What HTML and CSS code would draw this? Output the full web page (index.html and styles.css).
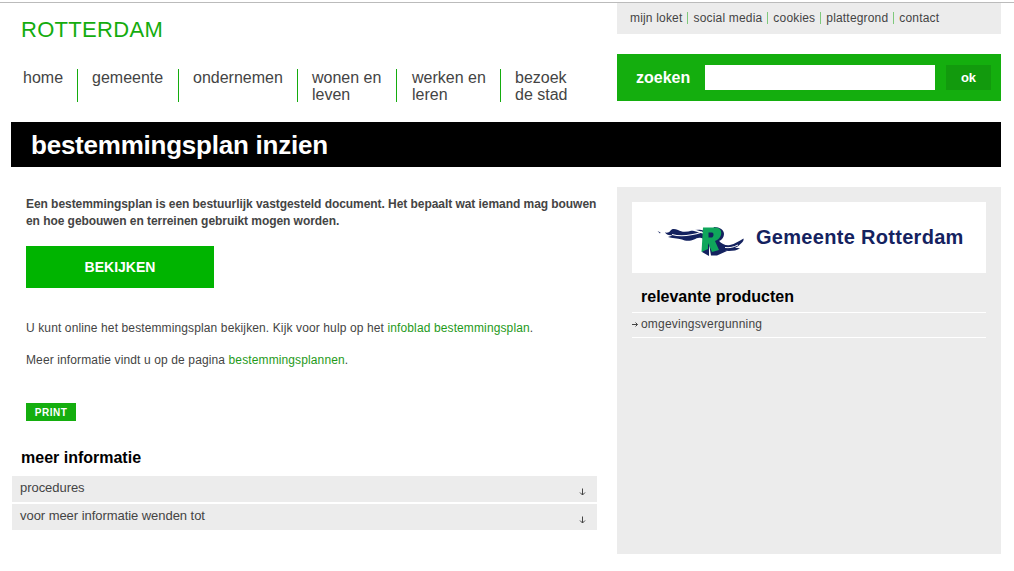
FILE: index.html
```html
<!DOCTYPE html>
<html lang="nl">
<head>
    <meta charset="UTF-8">
    <meta name="viewport" content="width=device-width, initial-scale=1.0">
    <title>Bestemmingsplan inzien</title>
    <link rel="stylesheet" href="styles.css">
</head>
<body>

<div class="top-line"></div>

<div class="page">
    <header class="header">
        <div class="header-left">
            <a class="site-name" href="#">ROTTERDAM</a>
            <ul class="main-nav">
                <li class="nav-home"><a href="#">home</a></li>
                <li class="nav-gemeente"><a href="#">gemeente</a></li>
                <li class="nav-ondernemen"><a href="#">ondernemen</a></li>
                <li class="nav-wonen"><a href="#">wonen en<br>leven</a></li>
                <li class="nav-werken"><a href="#">werken en<br>leren</a></li>
                <li class="nav-bezoek"><a href="#">bezoek<br>de stad</a></li>
            </ul>
        </div>
        <div class="header-right">
            <ul class="service-nav">
                <li><a href="#">mijn loket</a></li>
                <li><a href="#">social media</a></li>
                <li><a href="#">cookies</a></li>
                <li><a href="#">plattegrond</a></li>
                <li><a href="#">contact</a></li>
            </ul>
            <form class="search">
                <label for="search-input">zoeken</label>
                <input type="text" id="search-input">
                <button type="button">ok</button>
            </form>
        </div>
    </header>

    <h1 class="page-title">bestemmingsplan inzien</h1>

    <div class="columns">
        <main class="content">
            <p class="intro">Een bestemmingsplan is een bestuurlijk vastgesteld document. Het bepaalt wat iemand mag bouwen en hoe gebouwen en terreinen gebruikt mogen worden.</p>
            <a class="view-btn" href="#">BEKIJKEN</a>
            <p class="text">U kunt online het bestemmingsplan bekijken. Kijk voor hulp op het <a href="#">infoblad bestemmingsplan</a>.</p>
            <p class="text">Meer informatie vindt u op de pagina <a href="#">bestemmingsplannen</a>.</p>
            <a class="print-btn" href="#">PRINT</a>

            <h2 class="more-title">meer informatie</h2>
            <div class="fold">
                <span>procedures</span>
                <svg width="7" height="8" viewBox="0 0 7 8"><path d="M3.5 0.5V7M1 4.5L3.5 7L6 4.5" fill="none" stroke="#444" stroke-width="1"/></svg>
            </div>
            <div class="fold">
                <span>voor meer informatie wenden tot</span>
                <svg width="7" height="8" viewBox="0 0 7 8"><path d="M3.5 0.5V7M1 4.5L3.5 7L6 4.5" fill="none" stroke="#444" stroke-width="1"/></svg>
            </div>
        </main>

        <aside class="sidebar">
            <div class="logo-box">
                <svg class="logo-mark" width="88" height="32" viewBox="0 0 88 32">
                    <!-- left wave -->
                    <path d="M0.5 5L3.5 6.5L3 7.5Z" fill="#14225f"/>
                    <path d="M8 6.5C11 7 13 6 14 4C15 2.5 18 2.5 21 4C25 6.5 30 6 35 4.5C39 3.5 44 3.5 48 5L47 13C42 10.5 40 12 37 13.5C33 15.5 28 15 25 13.5C20 12 15 12.5 11 11C13 10.5 14 10 15 9C12 9.5 9 8.5 8 6.5Z" fill="#14225f"/>
                    <path d="M15 8.5C24 11 33 10 45 6" fill="none" stroke="#fff" stroke-width="1.2"/>
                    <path d="M33 3L50 8" fill="none" stroke="#fff" stroke-width="1.6"/>
                    <!-- R -->
                    <path d="M57 1C63 1 67 4 67 8C67 11 65 14 62 15L66 23L70 25L60 29.5L54 29.5L52 18V30L45 26Z" fill="#14225f"/>
                    <path d="M46 1.5H58C63 1.5 65 5 64 9C63 12 61 14 58 15L62 24L55 26L51 17V23L44.5 26Z" fill="#0fa65b"/>
                    <path d="M51.5 6.5H55C57 6.5 57 10.5 55 11.5H51.5Z" fill="#14225f"/>
                    <!-- right wave -->
                    <path d="M62 15C65 18 69 20 73 19C78 18 82 15 86.5 12.5C87 14 86 16 84 17.5C82 19.5 80 21 78 22C80 22 81.5 22 83 22.5C79 25 72 25.5 66 24.5C63 23 61 19 62 15Z" fill="#14225f"/>
                    <path d="M68 21.5C72 22 76 21.5 81 19" fill="none" stroke="#fff" stroke-width="1"/>
                </svg>
                <span class="logo-text">Gemeente Rotterdam</span>
            </div>
            <h2 class="products-title">relevante producten</h2>
            <ul class="products">
                <li>
                    <svg width="6" height="5" viewBox="0 0 6 5"><path d="M0 2.5H5.5M3.5 0.5L5.5 2.5L3.5 4.5" fill="none" stroke="#444" stroke-width="1"/></svg>
                    <a href="#">omgevingsvergunning</a>
                </li>
            </ul>
        </aside>
    </div>
</div>

</body>
</html>
```

FILE: styles.css
```css
body {
    font-family: "Liberation Sans", Arial, sans-serif;
    margin: 0;
    padding: 0;
    background-color: #fff;
    color: #444;
    font-size: 12px;
}

a {
    color: inherit;
    text-decoration: none;
}

ul {
    list-style: none;
    margin: 0;
    padding: 0;
}

.top-line {
    margin-top: 2px;
    height: 1px;
    background-color: #bbb;
}

.page {
    width: 990px;
    margin-left: 11px;
}

/* header */
.header {
    display: flex;
    justify-content: space-between;
    height: 119px;
}

.site-name {
    display: block;
    margin: 14px 0 0 10px;
    font-size: 22px;
    letter-spacing: 0.3px;
    line-height: 25px;
    color: #14ac0e;
}

.main-nav {
    display: flex;
    margin-top: 27px;
    font-size: 16px;
    line-height: 17px;
}

.main-nav li {
    height: 33px;
    padding-left: 14px;
    border-left: 1px solid #14ac0e;
}

.main-nav .nav-home {
    border-left: none;
    padding-left: 12px;
    width: 54px;
}

.nav-gemeente { width: 86px; }
.nav-ondernemen { width: 104px; }
.nav-wonen { width: 84px; }
.main-nav .nav-werken { width: 88px; padding-left: 15px; }
.nav-bezoek { width: 70px; }

.header-right {
    width: 384px;
}

.service-nav {
    display: flex;
    align-items: center;
    height: 29px;
    padding-left: 13px;
    padding-bottom: 2px;
    background-color: #ececec;
    letter-spacing: 0.18px;
}

.service-nav li {
    padding: 0 5px;
    line-height: 12px;
    border-left: 1px solid #7fc97c;
}

.service-nav li:first-child {
    padding-left: 0;
    border-left: none;
}

.search {
    display: flex;
    align-items: center;
    height: 47px;
    margin-top: 20px;
    background-color: #14ae0e;
}

.search label {
    width: 88px;
    padding-left: 19px;
    box-sizing: border-box;
    font-size: 16px;
    font-weight: bold;
    color: #fff;
}

.search input {
    width: 230px;
    height: 25px;
    padding: 0;
    border: none;
    background-color: #fff;
}

.search button {
    width: 45px;
    height: 25px;
    margin-left: 11px;
    padding: 0;
    border: none;
    background-color: #129a0d;
    color: #fff;
    font-family: inherit;
    font-size: 13px;
    font-weight: bold;
}

.page-title {
    margin: 0;
    height: 45px;
    padding-left: 20px;
    background-color: #000;
    color: #fff;
    font-size: 26px;
    letter-spacing: -0.23px;
    line-height: 46px;
}

/* columns */
.columns {
    display: flex;
    justify-content: space-between;
    margin-top: 20px;
}

.content {
    width: 586px;
}

.intro {
    margin: 9px -2px 0 15px;
    font-weight: bold;
    letter-spacing: -0.055px;
    line-height: 17px;
}

.view-btn {
    display: block;
    width: 188px;
    height: 42px;
    margin: 16px 0 0 15px;
    background-color: #00b400;
    color: #fff;
    font-size: 14px;
    font-weight: bold;
    line-height: 42px;
    text-align: center;
}

.text {
    margin: 32px 0 0 15px;
    letter-spacing: 0.12px;
    line-height: 16px;
}

.text + .text {
    margin-top: 16px;
}

.text a {
    color: #1f9a1a;
}

.print-btn {
    display: block;
    width: 50px;
    height: 18px;
    margin: 35px 0 0 15px;
    background-color: #14ae0e;
    color: #fff;
    font-size: 10px;
    font-weight: bold;
    letter-spacing: 0.5px;
    line-height: 19px;
    text-align: center;
}

.more-title {
    margin: 27px 0 0 10px;
    color: #000;
    font-size: 16px;
    line-height: 19px;
}

.fold {
    display: flex;
    justify-content: space-between;
    height: 26px;
    margin: 2px 0 0 1px;
    padding: 4px 11px 0 8px;
    box-sizing: border-box;
    font-size: 13px;
    letter-spacing: -0.05px;
    line-height: 16px;
    background-color: #ececec;
}

.more-title + .fold {
    margin-top: 9px;
}

.fold svg {
    margin-top: 8px;
}

/* sidebar */
.sidebar {
    width: 354px;
    height: 337px;
    padding: 15px;
    background-color: #ececec;
}

.logo-box {
    display: flex;
    align-items: center;
    height: 71px;
    padding-left: 25px;
    box-sizing: border-box;
    background-color: #fff;
}

.logo-mark {
    flex-shrink: 0;
    margin-top: 9px;
}

.logo-text {
    margin-left: 11px;
    color: #14225f;
    font-size: 20px;
    font-weight: bold;
    letter-spacing: 0.3px;
}

.products-title {
    margin: 14px 0 0 9px;
    color: #000;
    font-size: 16px;
    line-height: 19px;
}

.products {
    margin-top: 6px;
    border-top: 1px solid #fff;
}

.products li {
    display: flex;
    align-items: flex-start;
    height: 24px;
    border-bottom: 1px solid #fff;
    letter-spacing: 0.2px;
    line-height: 22px;
}

.products svg {
    margin-right: 3px;
    margin-top: 9px;
}
```
